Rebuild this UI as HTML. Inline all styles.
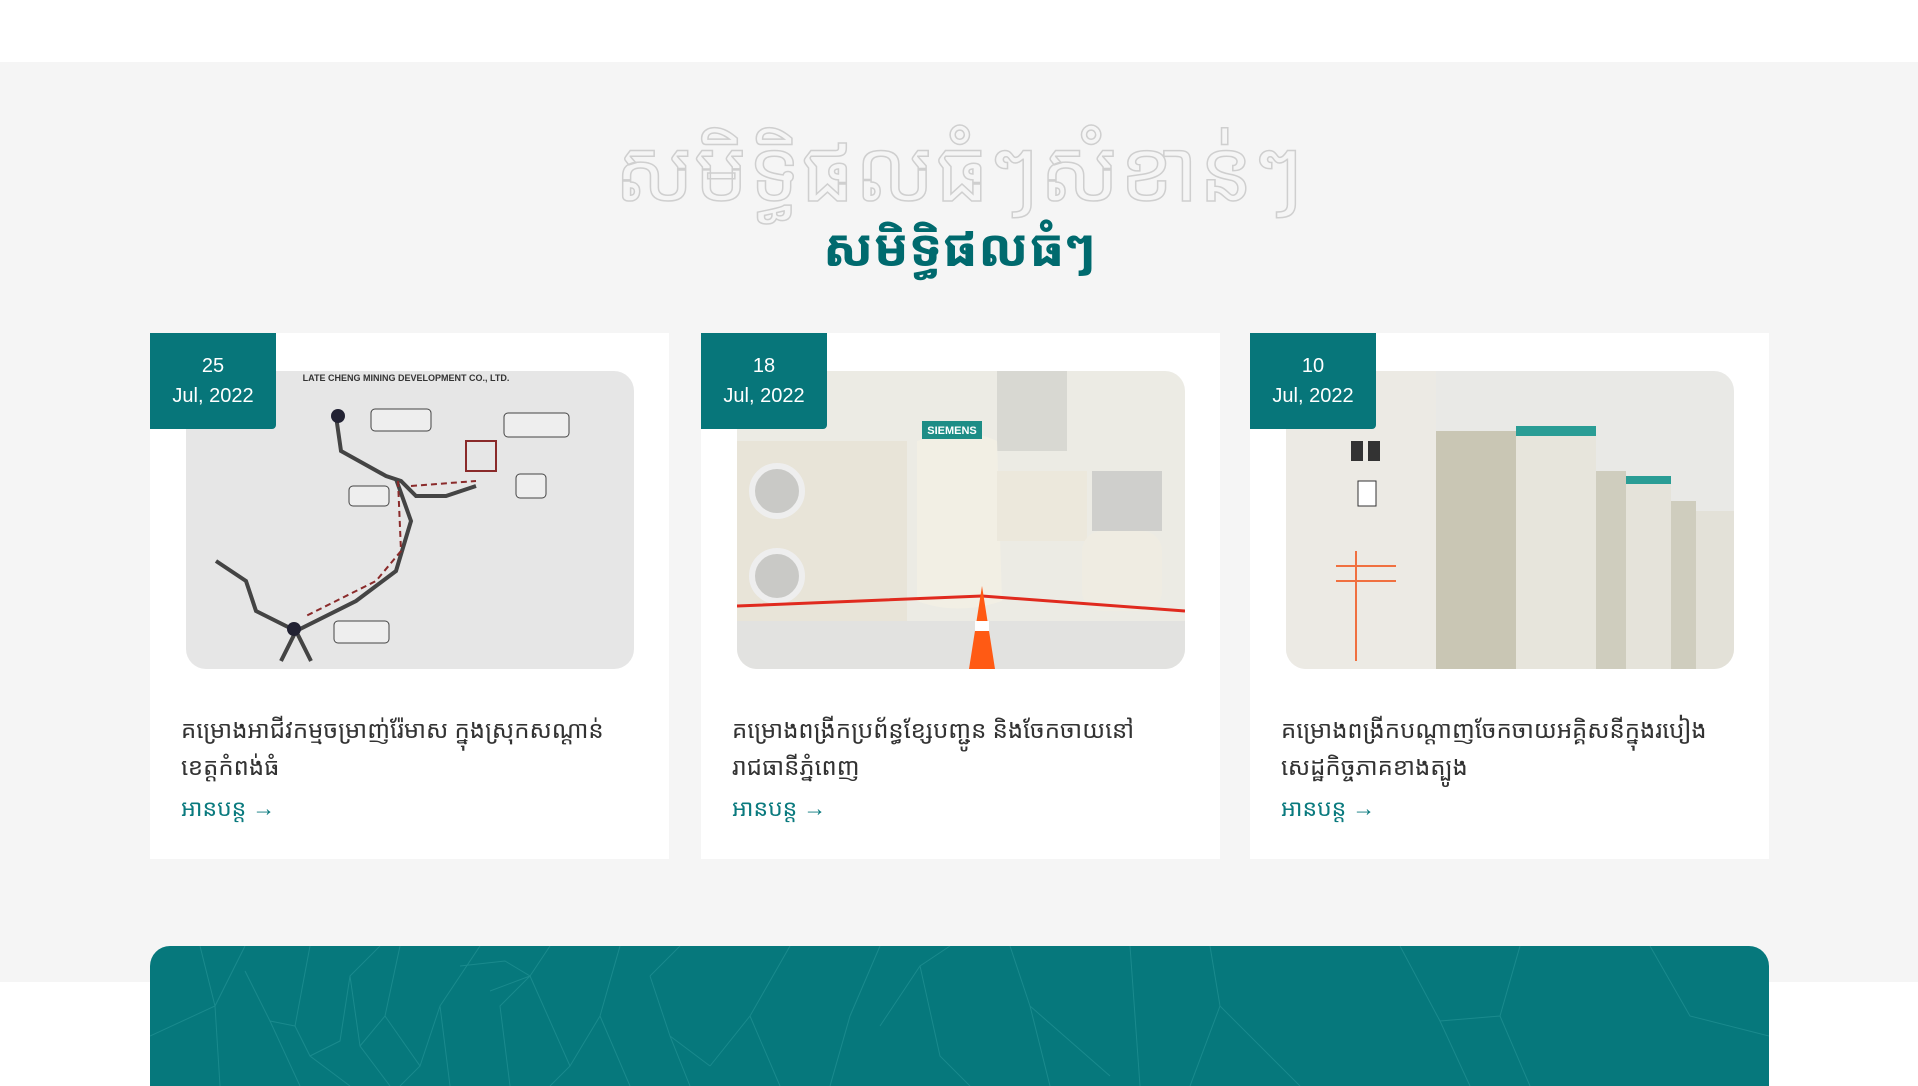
<!DOCTYPE html>
<html><head><meta charset="utf-8">
<style>
*{margin:0;padding:0;box-sizing:border-box}
html,body{width:1918px;height:1078px;overflow:hidden;background:#fff;font-family:"Khmer OS","Noto Sans Khmer","Khmer OS System","Liberation Sans",sans-serif}
.gray{position:absolute;left:0;top:62px;width:1918px;height:920px;background:#f5f5f5}
.outline{position:absolute;left:0;width:1918px;top:104px;text-align:center;font-size:86px;line-height:130px;color:transparent;-webkit-text-stroke:1.5px #cfcfcf;letter-spacing:0}
.title{position:absolute;left:0;width:1918px;top:207px;text-align:center;font-size:52px;line-height:80px;font-weight:bold;color:#006a6e}
.card{position:absolute;top:333px;width:519px;height:526px;background:#fff}
.date{position:absolute;left:0;top:0;width:126px;height:96px;background:#07767a;color:#fff;font-family:"Liberation Sans",sans-serif;font-size:20px;line-height:30px;text-align:center;padding-top:18px;border-bottom-right-radius:4px;z-index:2}
.img{position:absolute;left:36px;top:38px;width:448px;height:298px;border-radius:20px;overflow:hidden}
.txt{position:absolute;left:31px;top:378px;width:480px;font-size:24px;line-height:37px;color:#333;white-space:nowrap}
.more{position:absolute;left:31px;top:458px;font-size:23px;color:#0a7a7e}
.bottom{position:absolute;left:150px;top:946px;width:1619px;height:140px;background:#06787c;border-radius:20px 20px 0 0;overflow:hidden}
</style></head><body>
<div class="gray"></div>
<div class="outline">សមិទ្ធិផលធំៗសំខាន់ៗ</div>
<div class="title">សមិទ្ធិផលធំៗ</div>

<div class="card" style="left:150px">
<div class="date">25<br>Jul, 2022</div>
<div class="img" style="background:#e6e6e6">
<svg width="448" height="298" viewBox="0 0 448 298">
<text x="220" y="10" font-size="9" font-family="Liberation Sans" font-weight="bold" fill="#333" text-anchor="middle">LATE CHENG MINING DEVELOPMENT CO., LTD.</text>
<path d="M150 45 L155 80 L200 105 L215 110 L230 125 L260 125 L290 115 M210 108 L225 150 L210 200 L170 230 L110 260 L70 240 L60 210 L30 190 M110 260 L95 290 M110 260 L125 290" stroke="#444" stroke-width="4" fill="none"/>
<path d="M212 110 L215 180 L190 210 L120 245 M225 115 L290 110" stroke="#8a2a2a" stroke-width="2" stroke-dasharray="6 4" fill="none"/>
<circle cx="152" cy="45" r="7" fill="#223"/><circle cx="108" cy="258" r="7" fill="#223"/>
<rect x="185" y="38" width="60" height="22" rx="4" fill="#eee" stroke="#444"/>
<rect x="318" y="42" width="65" height="24" rx="4" fill="#eee" stroke="#444"/>
<rect x="330" y="103" width="30" height="24" rx="4" fill="#eee" stroke="#444"/>
<rect x="163" y="115" width="40" height="20" rx="4" fill="#eee" stroke="#444"/>
<rect x="148" y="250" width="55" height="22" rx="4" fill="#eee" stroke="#444"/>
<path d="M280 70 L310 70 L310 100 L280 100Z" stroke="#8a2a2a" fill="none" stroke-width="2"/>
</svg></div>
<div class="txt">គម្រោងអាជីវកម្មចម្រាញ់រ៉ែមាស ក្នុងស្រុកសណ្ដាន់<br>ខេត្តកំពង់ធំ</div>
<div class="more">អានបន្ត →</div>
</div>

<div class="card" style="left:701px">
<div class="date">18<br>Jul, 2022</div>
<div class="img" style="background:#ecebe4">
<svg width="448" height="298" viewBox="0 0 448 298">
<rect x="0" y="250" width="448" height="48" fill="#e2e2e0"/>
<rect x="260" y="0" width="70" height="80" fill="#d8d8d2"/>
<rect x="0" y="70" width="170" height="180" fill="#e8e4d8"/>
<circle cx="40" cy="120" r="25" fill="#c9c9c6" stroke="#eee" stroke-width="6"/>
<circle cx="40" cy="205" r="25" fill="#c9c9c6" stroke="#eee" stroke-width="6"/>
<path d="M180 70 Q230 55 260 70 L265 230 Q220 245 180 230Z" fill="#f2efe4"/>
<rect x="260" y="100" width="90" height="70" fill="#ece8dc"/>
<rect x="355" y="100" width="70" height="60" fill="#cfcfcc"/>
<rect x="345" y="160" width="80" height="80" rx="20" fill="#efece2"/>
<rect x="185" y="50" width="60" height="18" fill="#1d8d86"/>
<text x="215" y="63" font-size="11" font-weight="bold" font-family="Liberation Sans" fill="#fff" text-anchor="middle">SIEMENS</text>
<path d="M0 235 L245 225 L448 240" stroke="#e02a1e" stroke-width="3" fill="none"/>
<path d="M245 215 L232 298 L258 298Z" fill="#ff5a14"/>
<rect x="238" y="250" width="14" height="10" fill="#fff"/>
</svg></div>
<div class="txt">គម្រោងពង្រីកប្រព័ន្ធខ្សែបញ្ជូន និងចែកចាយនៅ<br>រាជធានីភ្នំពេញ</div>
<div class="more">អានបន្ត →</div>
</div>

<div class="card" style="left:1250px">
<div class="date">10<br>Jul, 2022</div>
<div class="img" style="background:#e9e9e6">
<svg width="448" height="298" viewBox="0 0 448 298">
<rect x="0" y="0" width="150" height="298" fill="#eceae4"/>
<rect x="150" y="60" width="90" height="238" fill="#c9c6b4"/>
<rect x="230" y="60" width="80" height="238" fill="#e7e5dc"/>
<rect x="310" y="100" width="30" height="198" fill="#cfcdbe"/>
<rect x="340" y="110" width="45" height="188" fill="#e5e3da"/>
<rect x="385" y="130" width="25" height="168" fill="#cfcdbe"/>
<rect x="410" y="140" width="38" height="158" fill="#e3e1d8"/>
<rect x="230" y="55" width="80" height="10" fill="#2a9d95"/>
<rect x="340" y="105" width="45" height="8" fill="#2a9d95"/>
<path d="M70 180 L70 290 M50 195 L110 195 M50 210 L110 210" stroke="#f07040" stroke-width="2"/>
<rect x="65" y="70" width="12" height="20" fill="#333"/><rect x="82" y="70" width="12" height="20" fill="#333"/>
<rect x="72" y="110" width="18" height="25" fill="#fff" stroke="#333"/>
</svg></div>
<div class="txt">គម្រោងពង្រីកបណ្ដាញចែកចាយអគ្គិសនីក្នុងរបៀង<br>សេដ្ឋកិច្ចភាគខាងត្បូង</div>
<div class="more">អានបន្ត →</div>
</div>

<div class="bottom">
<svg width="1619" height="140" viewBox="0 0 1619 140" fill="none" stroke="#1a8a8d" stroke-width="1">
<path d="M50 0 L65 60 L0 90 M65 60 L70 140 M65 60 L95 0 M95 25 L120 75 L150 140 M120 75 L145 80 L160 0 M145 80 L160 110 L200 140 M160 110 L190 95 L200 30 L230 0 M200 30 L210 100 L240 140 M210 100 L235 70 L250 0 M235 70 L270 120 L250 140 M270 120 L290 60 L330 0 M290 60 L300 140 M310 20 L355 15 L380 30 L340 45 M380 30 L350 60 L360 140 M380 30 L400 0 M380 30 L420 120 L400 140 M420 120 L450 70 L470 0 M450 70 L480 140 M500 30 L530 0 M500 30 L520 90 L540 140 M520 90 L560 120 M560 120 L600 70 L640 0 M600 70 L630 140 M700 70 L730 0 M700 70 L680 140 M730 80 L770 20 L800 0 M770 20 L790 110 L820 140 M860 0 L880 60 L960 130 M880 60 L900 140 M980 0 L990 140 M1060 0 L1070 60 L1150 140 M1070 60 L1040 140 M1250 0 L1290 75 L1320 140 M1290 75 L1350 70 L1370 0 M1350 70 L1380 140 M1500 0 L1540 70 L1619 90"/>
</svg>
</div>
</body></html>
